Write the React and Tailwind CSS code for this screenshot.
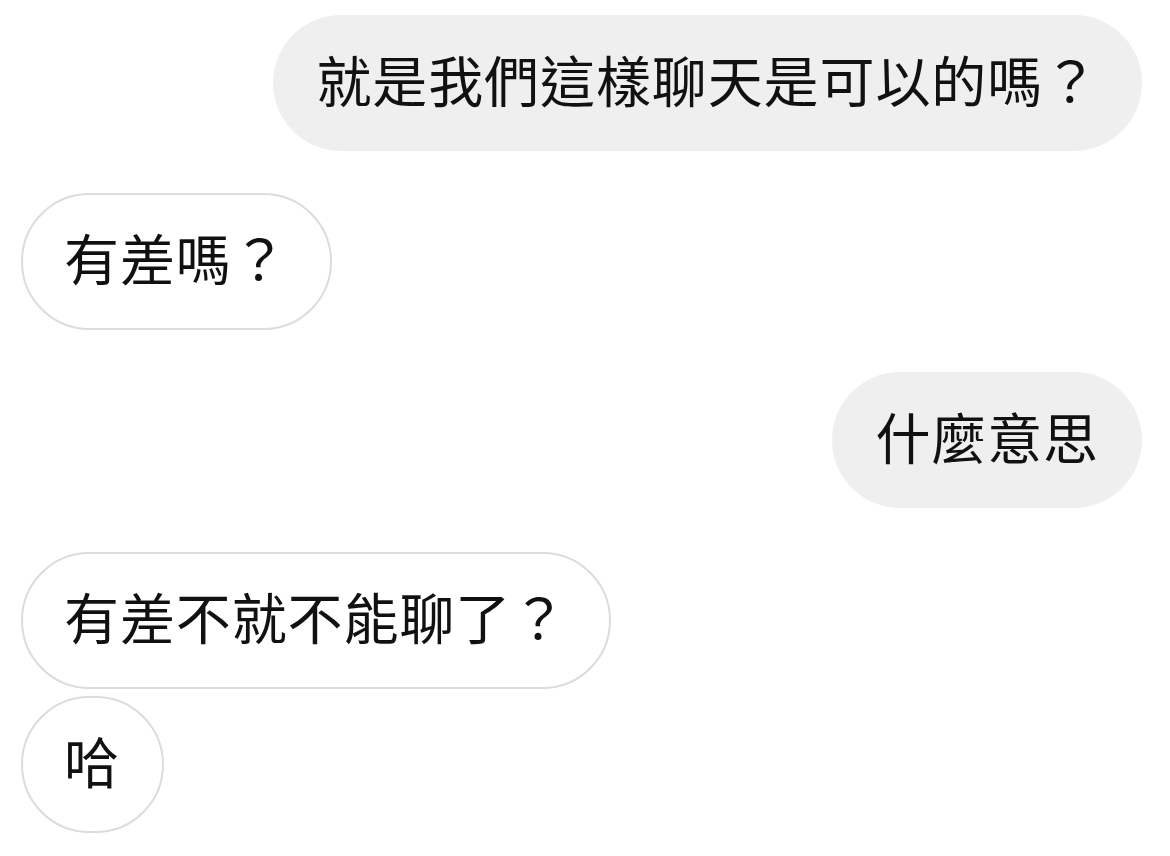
const font = {
  fontFamily: '"Noto Sans CJK TC", "Noto Sans CJK SC", sans-serif',
};

function Outgoing({ children, className = "" }) {
  return (
    <div className={"flex justify-end " + className}>
      <div className="rounded-full bg-[#efefef] pl-[43px] pr-[43px] pb-[10px] h-[136px] flex items-center text-[55px] leading-none tracking-[0.9px] text-[#111111]">
        {children}
      </div>
    </div>
  );
}

function Incoming({ children, className = "" }) {
  return (
    <div className={"flex justify-start " + className}>
      <div className="rounded-full border-2 border-[#dcdcdc] bg-white pl-[41px] pr-[42px] pb-[10px] h-[137px] flex items-center text-[55px] leading-none tracking-[0.9px] text-[#111111]">
        {children}
      </div>
    </div>
  );
}

export default function App() {
  return (
    <div
      className="w-[1170px] h-[856px] bg-white overflow-hidden flex flex-col pt-[15px] pl-[21px] pr-[28px]"
      style={font}
    >
      <Outgoing>就是我們這樣聊天是可以的嗎？</Outgoing>
      <Incoming className="mt-[42px]">有差嗎？</Incoming>
      <Outgoing className="mt-[42px]">什麼意思</Outgoing>
      <Incoming className="mt-[44px]">有差不就不能聊了？</Incoming>
      <Incoming className="mt-[7px]">哈</Incoming>
    </div>
  );
}
